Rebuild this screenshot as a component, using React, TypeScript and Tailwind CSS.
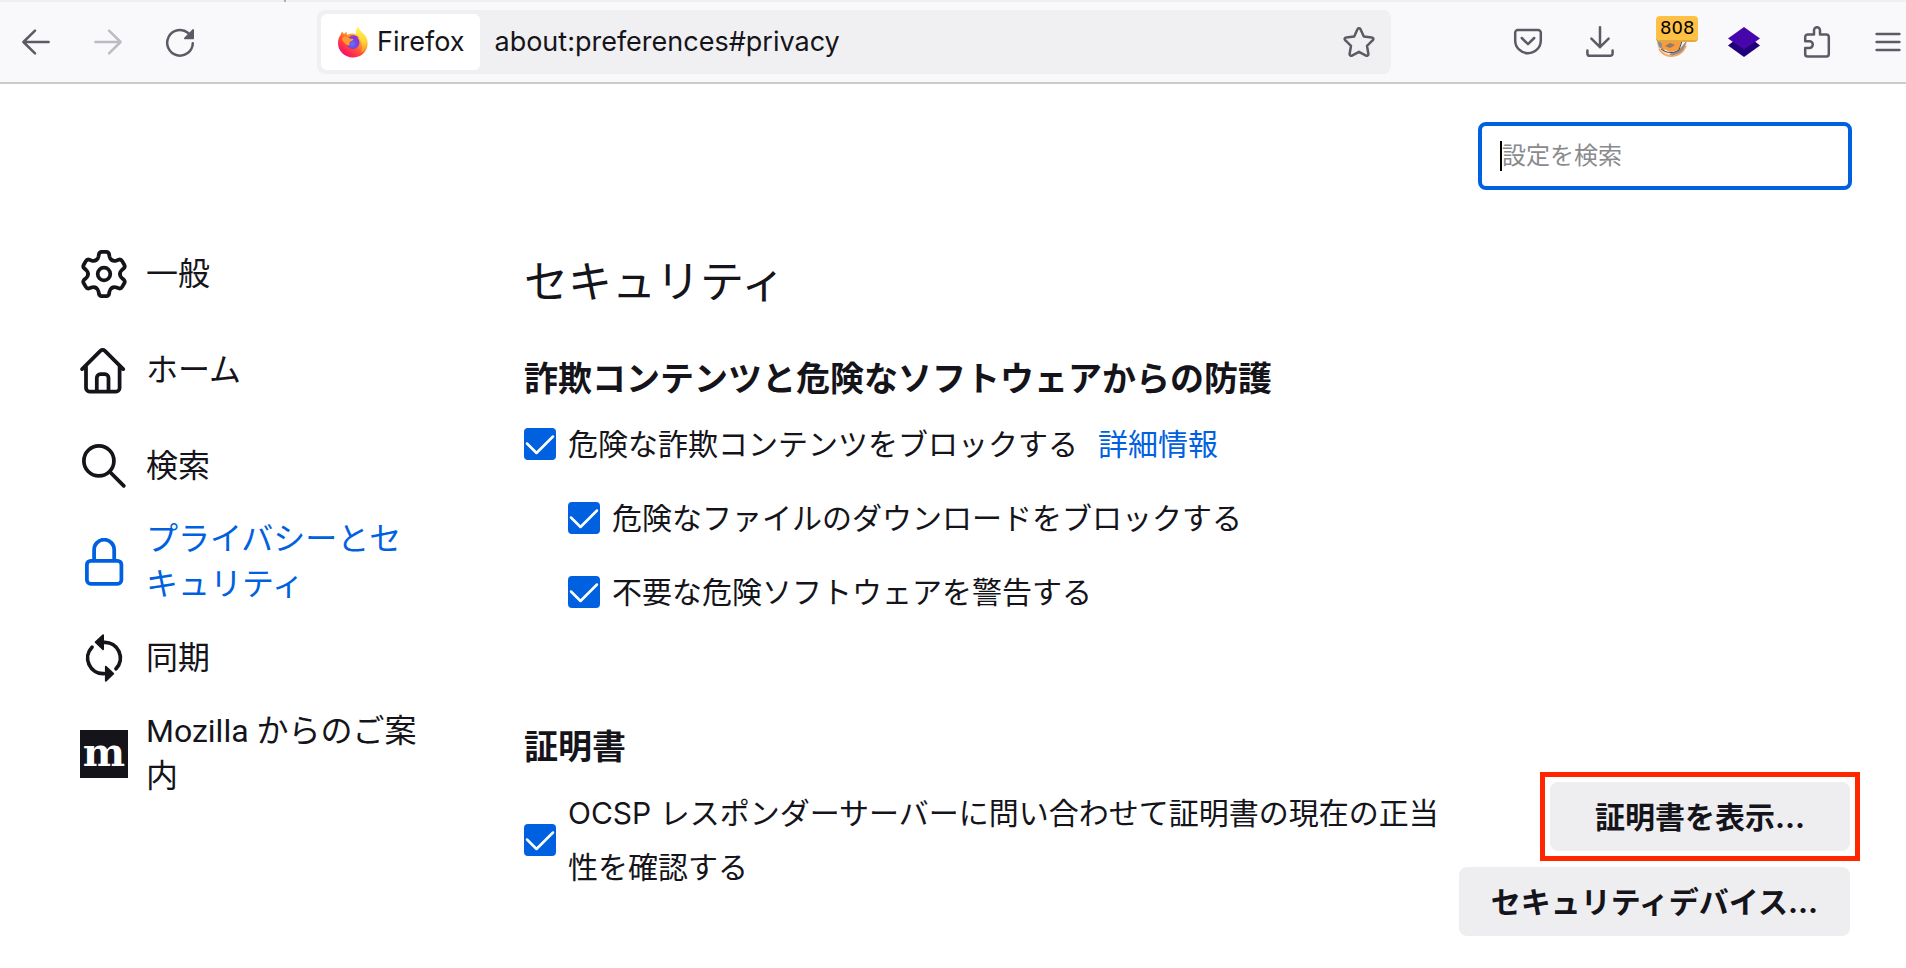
import { useState, type ReactNode } from 'react'
import { clsx } from 'clsx'

const TEXT = 'text-[#15141a]'

function Svg({ className, children }: { className: string; children: ReactNode }) {
  return (
    <svg
      viewBox="0 0 16 16"
      className={clsx('shrink-0', className)}
      fill="none"
      stroke="currentColor"
      strokeWidth="1.25"
      strokeLinecap="round"
      strokeLinejoin="round"
      aria-hidden="true"
    >
      {children}
    </svg>
  )
}

/* Toolbar icons */
const BackIcon = () => (
  <Svg className="size-8">
    <path d="M14.3 8H1.8M7.5 2.3 1.7 8l5.8 5.7" />
  </Svg>
)

const ForwardIcon = () => (
  <Svg className="size-8">
    <path d="M1.7 8h12.5M8.5 2.3 14.3 8l-5.8 5.7" />
  </Svg>
)

const ReloadIcon = () => (
  <Svg className="size-8">
    <path d="M14.4 8.6a6.4 6.4 0 1 1-2.3-5.1" />
    <path d="M14.6 1.9v4.3h-4.2z" fill="currentColor" strokeWidth="0.8" />
  </Svg>
)

const StarIcon = () => (
  <Svg className="size-8">
    <path d="M7.3 1.5a.8.8 0 0 1 1.4 0l1.7 3.7 4 .5a.8.8 0 0 1 .5 1.4l-2.9 2.8.7 4.1a.8.8 0 0 1-1.2.8L8 12.9l-3.5 1.9a.8.8 0 0 1-1.2-.8L4 9.9 1.1 7.1a.8.8 0 0 1 .5-1.4l4-.5z" />
  </Svg>
)

const PocketIcon = () => (
  <Svg className="size-8">
    <path d="M2.9 2h10.2A1.3 1.3 0 0 1 14.4 3.3V7.2A6.4 6.4 0 0 1 1.6 7.2V3.3A1.3 1.3 0 0 1 2.9 2z" />
    <path d="M4.9 6 8 9.1 11.1 6" />
  </Svg>
)

const DownloadIcon = () => (
  <Svg className="size-8">
    <path d="M8 .6v10M3.7 6.3 8 10.6l4.3-4.3M1.7 12.3V13.7a1.2 1.2 0 0 0 1.2 1.2h10.2a1.2 1.2 0 0 0 1.2-1.2V12.3" />
  </Svg>
)

const PuzzleIcon = () => (
  <Svg className="size-8">
    <path d="M2.6 7.6V5.5A1.3 1.3 0 0 1 3.9 4.2H7V2.1a1.5 1.5 0 0 1 3 0V4.2h3.1a1.3 1.3 0 0 1 1.3 1.3V14a1.3 1.3 0 0 1-1.3 1.3H3.900A1.3 1.3 0 0 1 2.600 14V11H4.700a1.700 1.700 0 0 0 0-3.400z" />
  </Svg>
)

const MenuIcon = () => (
  <Svg className="size-8">
    <path d="M2.3 4h11.4M2.3 8h11.4M2.3 12h11.4" />
  </Svg>
)

const LayersIcon = () => (
  <svg viewBox="0 0 32 32" className="size-8" aria-hidden="true">
    <path d="M0 19.5 5 15.500H27l5 4L16 31z" fill="#20007a" />
    <path d="M16 1 32 12.5 16 23.500 0 12.5z" fill="#4706ab" />
  </svg>
)

const FoxIcon = () => (
  <svg viewBox="0 0 32 32" className="size-8" aria-hidden="true">
    <circle cx="16" cy="16" r="15" fill="#fbd3ae" />
    <path d="M1 13 5 23 14 29 24 27 31 13z" fill="#f4f2f0" />
    <path d="M0 12 3 21 9 25 5 15zM31 14 27 26 16 30 13 28 23 24z" fill="#8f8f8f" />
    <path d="M6 13H26L23 24 14 26 6 22z" fill="#f99a3c" />
    <path d="M9 20l5-3 5 2-5 3z" fill="#8a7a6c" />
    <path d="M5 23c5 4 12 5 18 1M26 15l-3 9" stroke="#4a4a4a" fill="none" />
    <path d="M3 23c6 10 21 10 27-3" stroke="#f9a65a" strokeWidth="1.5" fill="none" />
  </svg>
)

const FirefoxLogo = () => (
  <svg viewBox="0 0 32 32" className="size-8 shrink-0" aria-hidden="true">
    <defs>
      <linearGradient id="ff-body" x1="0.85" y1="0.1" x2="0.2" y2="0.95">
        <stop offset="0.05" stopColor="#fff44f" />
        <stop offset="0.35" stopColor="#ffa52a" />
        <stop offset="0.6" stopColor="#ff5634" />
        <stop offset="0.85" stopColor="#ff2154" />
        <stop offset="1" stopColor="#e31587" />
      </linearGradient>
      <linearGradient id="ff-flame" x1="0.5" y1="0" x2="0.6" y2="1">
        <stop offset="0" stopColor="#fff44f" />
        <stop offset="0.6" stopColor="#ffd23a" />
        <stop offset="1" stopColor="#ff8a2a" />
      </linearGradient>
      <radialGradient id="ff-globe" cx="0.45" cy="0.6" r="0.6">
        <stop offset="0" stopColor="#6173ff" />
        <stop offset="0.6" stopColor="#7543e3" />
        <stop offset="1" stopColor="#9a2fc9" />
      </radialGradient>
    </defs>
    <path
      d="M3.500 9 5 5.5 7 8 9.5 5.500l.5 3.500C13 7 17 7 19 8.5c-.5-3 .5-5.500 2-7.500 1 3.500 4 5 6.500 8 3 3.500 4 8 2.500 12.500C28 28 22.500 31.500 16 31.500 7.500 31.500 1 25 1 17c0-3.500 1-6 2.500-8z"
      fill="url(#ff-body)"
    />
    <path d="M19.500 9C18.500 5.500 19.500 3 21 1c1 3.500 4 5 6.500 8 2.500 4 3 9 1 13-1 2-3 4-5 5 3-5 2-13-4-18z" fill="url(#ff-flame)" />
    <circle cx="16" cy="16.5" r="6.5" fill="url(#ff-globe)" />
    <path d="M12 10.500c3-2 8-1.500 10 1.500-1-.5-2-.5-3 0-2-1.500-4-2-7-1.500z" fill="#a62bd0" />
    <path d="M5 12c2-2 5-1.500 7 0 1.500.8 3 .7 4.500 1-.5 2-3 2-4 3.500-.5 1.500.5 2 0 3C8.500 19 5.500 16 5 12z" fill="#ff9a2e" />
  </svg>
)

/* Category icons */
const GearIcon = () => (
  <Svg className="size-12">
    {['rotate(0 8 8)', 'rotate(60 8 8)', 'rotate(120 8 8)', 'rotate(180 8 8)', 'rotate(240 8 8)', 'rotate(300 8 8)'].map((turn) => (
      <path key={turn} transform={turn} d="M5.35 3.4C5.9 3.1 6.1 2.7 6.2 2.1L6.3 1.4Q6.5.6 7.3.6H8.7Q9.5.6 9.7 1.4L9.8 2.1C9.9 2.7 10.1 3.1 10.65 3.4" />
    ))}
    <circle cx="8" cy="8" r="2.1" />
  </Svg>
)

const HomeIcon = () => (
  <Svg className="size-12">
    <path d="M.7 7.700 6.800 1.600a1.100 1.100 0 0 1 1.500 0l6.100 6.100M2 6.800v7.200a1.200 1.200 0 0 0 1.200 1.200h8.800a1.200 1.200 0 0 0 1.200-1.200V6.800M5.600 15V10.600a1.200 1.200 0 0 1 1.200-1.200h1.500a1.200 1.200 0 0 1 1.200 1.200V15" />
  </Svg>
)

const SearchIcon = () => (
  <Svg className="size-12">
    <circle cx="6.3" cy="6.3" r="5" />
    <path d="m10 10 4.6 4.6" />
  </Svg>
)

const LockIcon = () => (
  <Svg className="size-12">
    <rect x="2.3" y="7.6" width="11.5" height="7.7" rx="1.3" />
    <path d="M4.7 7.4V3.9a3.35 3.35 0 0 1 6.7 0V7.4" />
  </Svg>
)

const SyncIcon = () => (
  <Svg className="size-12">
    <path d="M4 4.4a5.2 5.2 0 0 0 4 8.800M12 11.6A5.2 5.2 0 0 0 8 2.8" />
    <path d="M7.7.4v4.7L5.2 2.7zM8.6 10.9v4.7l2.5-2.4z" fill="currentColor" strokeWidth="0.6" />
  </Svg>
)

const MozillaIcon = () => (
  <span
    aria-hidden="true"
    className="flex size-12 shrink-0 items-center justify-center bg-[#15141a] pb-1 font-['DejaVu_Serif',serif] text-[40px] leading-none font-bold text-white"
  >
    m
  </span>
)

const categories = [
  { id: 'general', name: '一般', icon: <GearIcon /> },
  { id: 'home', name: 'ホーム', icon: <HomeIcon /> },
  { id: 'search', name: '検索', icon: <SearchIcon /> },
  { id: 'privacy', name: 'プライバシーとセキュリティ', icon: <LockIcon /> },
  { id: 'sync', name: '同期', icon: <SyncIcon /> },
  { id: 'more', name: 'Mozilla からのご案内', icon: <MozillaIcon /> },
]

function Toolbar() {
  return (
    <header className="border-b-2 border-[#cccccc] bg-[#f9f9fb] text-[#5b5b66]">
      <div className="h-0.5 bg-[#f0f0f2] pl-[284px]">
        <div className="h-0.5 w-0.5 bg-[#aeaeb2]" />
      </div>
      <div className="flex items-center pt-2 pr-0.5 pb-2 pl-5">
        <div className="flex items-center gap-10">
          <button aria-label="戻る"><BackIcon /></button>
          <button aria-label="進む" className="text-[#bcbcc2]" disabled><ForwardIcon /></button>
          <button aria-label="再読み込み"><ReloadIcon /></button>
        </div>

        {/* Address bar */}
        <div className="mx-[121px] flex h-16 min-w-0 flex-1 items-center rounded-lg bg-[#f0f0f2] px-1">
          <button className={clsx('flex h-14 items-center gap-2 rounded-md bg-white px-4 text-[27px]', TEXT)}>
            <FirefoxLogo />
            Firefox
          </button>
          <input
            type="text"
            aria-label="アドレス"
            defaultValue="about:preferences#privacy"
            className={clsx('min-w-0 flex-1 bg-transparent px-3.5 text-[27px] outline-none', TEXT)}
          />
          <button aria-label="ブックマーク" className="mr-3"><StarIcon /></button>
        </div>

        <div className="flex items-center gap-10">
          <button aria-label="Pocket"><PocketIcon /></button>
          <button aria-label="ダウンロード"><DownloadIcon /></button>
          <button aria-label="拡張機能の通知" className="relative">
            <FoxIcon />
            <span className="absolute -top-2.5 left-0 rounded-sm border-b-2 border-[#e0a840] bg-[#ffc145] px-1 font-['DejaVu_Sans',sans-serif] text-lg leading-6 text-black">
              808
            </span>
          </button>
          <button aria-label="レイヤー"><LayersIcon /></button>
          <button aria-label="拡張機能"><PuzzleIcon /></button>
          <button aria-label="メニュー"><MenuIcon /></button>
        </div>
      </div>
    </header>
  )
}

function Checkbox({ id, children }: { id: string; children: ReactNode }) {
  const [checked, setChecked] = useState(true)

  return (
    <div className="flex items-center gap-3">
      <span className="grid shrink-0">
        <input
          id={id}
          type="checkbox"
          checked={checked}
          onChange={(e) => setChecked(e.target.checked)}
          className="col-start-1 row-start-1 size-8 appearance-none rounded border-2 border-[#8f8f9d] checked:border-[#0061e0] checked:bg-[#0061e0]"
        />
        {checked && (
          <svg
            viewBox="0 0 32 32"
            className="pointer-events-none col-start-1 row-start-1 size-8"
            fill="none"
            stroke="white"
            strokeWidth="2.5"
            strokeLinecap="round"
            strokeLinejoin="round"
            aria-hidden="true"
          >
            <path d="M3 15.5 12.5 25 29 8.5" />
          </svg>
        )}
      </span>
      <label htmlFor={id}>{children}</label>
    </div>
  )
}

export default function App() {
  const [active, setActive] = useState('privacy')

  return (
    <div lang="ja" className={clsx("min-h-screen bg-white font-['Inter','Noto_Sans_CJK_JP',sans-serif]", TEXT)}>
      <Toolbar />

      <div className="pt-[38px] pr-14 pl-20">
        <div className="flex justify-end">
          <div className="-mr-0.5 flex h-[68px] w-[374px] items-center rounded-lg border-4 border-[#0061e0] px-[18px]">
            {/* Text caret */}
            <span className="h-[30px] w-0.5 shrink-0 bg-black" />
            <input
              type="search"
              aria-label="設定を検索"
              placeholder="設定を検索"
              className="min-w-0 flex-1 bg-transparent text-2xl outline-none placeholder:text-[#8a8a8e]"
            />
          </div>
        </div>

        <div className="flex pt-9">
          {/* Categories */}
          <nav className="w-[346px] shrink-0 font-['Roboto','Noto_Sans_CJK_JP',sans-serif]">
            {categories.map((category) => (
              <a
                key={category.id}
                href={`#${category.id}`}
                onClick={() => setActive(category.id)}
                className={clsx(
                  'flex min-h-24 items-center gap-[18px] text-[32px] leading-[45px]',
                  active === category.id && 'text-[#0061e0]'
                )}
              >
                {category.icon}
                <span>{category.name}</span>
              </a>
            ))}
          </nav>

          <main className="ml-[98px] min-w-0 flex-1 pt-6 text-[30px] leading-[54px]">
            <h1 className="text-[44px] leading-[64px]">セキュリティ</h1>

            <section className="pt-10">
              <h2 className="text-[34px] leading-[50px] font-bold">詐欺コンテンツと危険なソフトウェアからの防護</h2>
              <div className="flex flex-col gap-5 pt-[13px]">
                <div className="flex items-center gap-5">
                  <Checkbox id="block-content">危険な詐欺コンテンツをブロックする</Checkbox>
                  <a href="#learn-more" className="text-[#0061e0]">詳細情報</a>
                </div>
                <div className="flex flex-col gap-5 pl-11">
                  <Checkbox id="block-downloads">危険なファイルのダウンロードをブロックする</Checkbox>
                  <Checkbox id="warn-software">不要な危険ソフトウェアを警告する</Checkbox>
                </div>
              </div>
            </section>

            <section className="pt-[103px]">
              <h2 className="text-[34px] leading-[50px] font-bold">証明書</h2>
              <div className="flex items-start justify-between gap-2 pt-2.5">
                <div className="pt-1">
                  <Checkbox id="ocsp">OCSP レスポンダーサーバーに問い合わせて証明書の現在の正当性を確認する</Checkbox>
                </div>
                <div className="flex shrink-0 flex-col items-end gap-4 font-bold">
                  <div className="relative">
                    <button className="h-[69px] min-w-[300px] rounded-lg bg-[#eeeef0] px-8">証明書を表示...</button>
                    {/* Highlight frame */}
                    <div className="pointer-events-none absolute -inset-2.5 border-[5px] border-[#ff2600]" />
                  </div>
                  <button className="h-[69px] rounded-lg bg-[#eeeef0] px-8">セキュリティデバイス...</button>
                </div>
              </div>
            </section>
          </main>
        </div>
      </div>
    </div>
  )
}
